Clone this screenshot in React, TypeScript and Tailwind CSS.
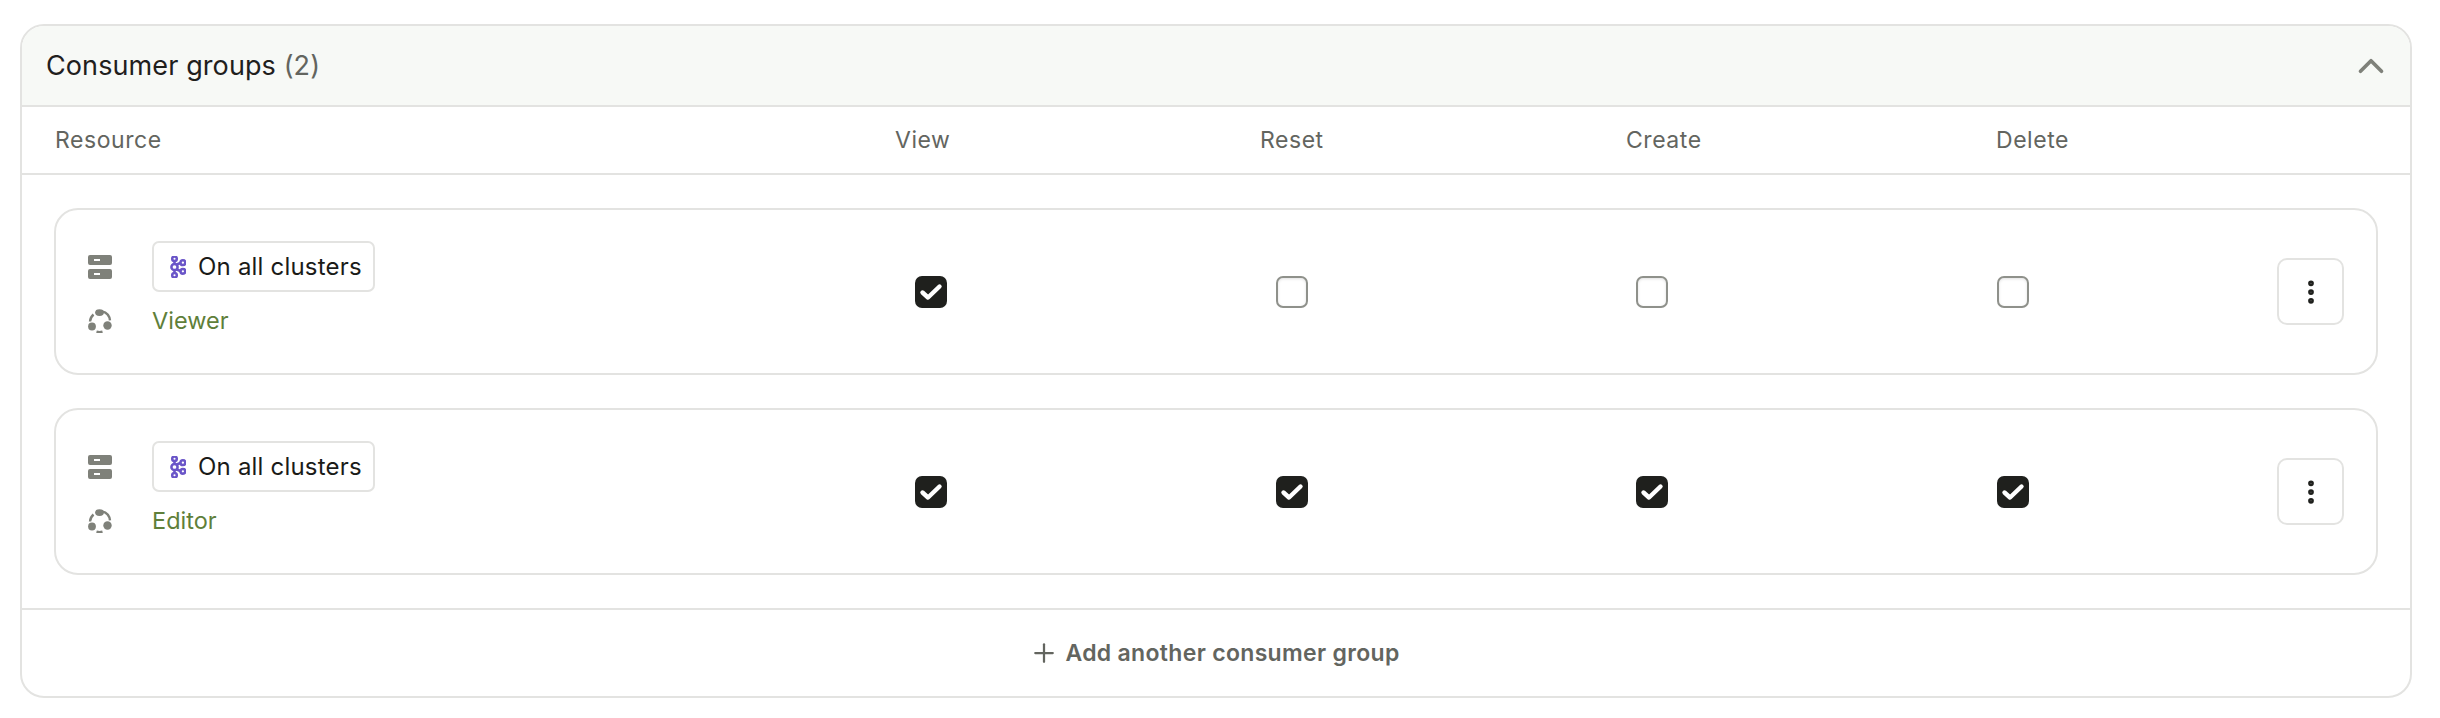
import React from "react";
import { ChevronUp, Plus, EllipsisVertical } from "lucide-react";

function ServerIcon() {
  return (
    <svg width="24" height="24" viewBox="0 0 24 24" className="block">
      <path fillRule="evenodd" fill="#7f817a" d="M2 0h20a2 2 0 0 1 2 2v6a2 2 0 0 1-2 2H2a2 2 0 0 1-2-2V2a2 2 0 0 1 2-2zM6 4v2h6V4H6z" />
      <path fillRule="evenodd" fill="#7f817a" d="M2 14h20a2 2 0 0 1 2 2v6a2 2 0 0 1-2 2H2a2 2 0 0 1-2-2v-6a2 2 0 0 1 2-2zM6 18v2h6v-2H6z" />
    </svg>
  );
}

function GroupIcon() {
  return (
    <svg width="24" height="24" viewBox="0 0 24 24" fill="none" className="block">
      <path d="M5.5 5.5A10.5 10.5 0 0 0 2 12.5" stroke="#7f817a" strokeWidth="2.4" />
      <path d="M14 2.4a10.5 10.5 0 0 1 8 9" stroke="#7f817a" strokeWidth="2.4" />
      <path d="M8.5 22.6a10.5 10.5 0 0 0 6 0" stroke="#7f817a" strokeWidth="2.2" />
      <ellipse cx="11.5" cy="3.6" rx="4.4" ry="3.4" fill="#7f817a" />
      <circle cx="4" cy="17.5" r="3.9" fill="#7f817a" />
      <circle cx="19.5" cy="16.5" r="4.2" fill="#7f817a" />
    </svg>
  );
}

function KafkaIcon() {
  return (
    <svg width="16" height="22" viewBox="0 0 16 22" fill="none" stroke="#6a55c8" strokeWidth="2.5" className="block">
      <path d="M4.5 4v14M4.5 9.5l7-3M4.5 12.5l7 3" />
      <circle cx="4.5" cy="2.8" r="2.3" fill="#fff" />
      <circle cx="4.5" cy="11" r="3.1" fill="#fff" />
      <circle cx="4.5" cy="19.2" r="2.3" fill="#fff" />
      <circle cx="12.9" cy="6.7" r="2.4" fill="#fff" />
      <circle cx="12.9" cy="15.3" r="2.4" fill="#fff" />
    </svg>
  );
}

function Box({ on }: { on: boolean }) {
  if (on) {
    return (
      <div className="w-8 h-8 rounded-[7px] bg-[#1f201d] flex items-center justify-center">
        <svg width="24" height="20" viewBox="0 0 24 20" fill="none">
          <path d="M3.5 10.5l5.5 5L20.5 4.5" stroke="#fff" strokeWidth="4.4" strokeLinecap="round" strokeLinejoin="round" />
        </svg>
      </div>
    );
  }
  return <div className="w-8 h-8 rounded-[7px] bg-white border-2 border-[#8f918b] shadow-[inset_0_1px_3px_rgba(0,0,0,0.12)]" />;
}

function Row({ role, checks }: { role: string; checks: boolean[] }) {
  return (
    <div className="h-[167px] rounded-[24px] border-2 border-[#e3e3e1] flex items-center pl-[32px] pr-[32px]">
      <div className="w-[827px] flex flex-col pb-[6px]">
        <div className="flex items-center h-[51px]">
          <div className="w-[64px]"><ServerIcon /></div>
          <div className="h-[51px] w-[223px] rounded-[7px] border-2 border-[#e3e3e1] flex items-center pl-[16px] gap-[12px]">
            <KafkaIcon />
            <span className="text-[24px] tracking-[0.2px] text-[#1a1b18]">On all clusters</span>
          </div>
        </div>
        <div className="flex items-center h-[30px] mt-[14px]">
          <div className="w-[64px]"><GroupIcon /></div>
          <span className="text-[23.5px] text-[#5f7f3a]">{role}</span>
        </div>
      </div>
      <div className="w-[361px]"><Box on={checks[0]} /></div>
      <div className="w-[360px]"><Box on={checks[1]} /></div>
      <div className="w-[361px]"><Box on={checks[2]} /></div>
      <div className="flex-1"><Box on={checks[3]} /></div>
      <button className="w-[67px] h-[67px] rounded-[10px] border-2 border-[#e3e3e1] flex items-center justify-center">
        <EllipsisVertical size={30} color="#1f201d" strokeWidth={2.6} />
      </button>
    </div>
  );
}

export default function App() {
  return (
    <div className="bg-white h-[718px] pt-[24px] pl-[20px] pr-[28px] font-['Inter',sans-serif]">
      <div className="h-[674px] rounded-[24px] border-2 border-[#e3e3e1] overflow-hidden flex flex-col">
        <div className="h-[81px] shrink-0 bg-[#f7f9f6] border-b-2 border-[#e3e3e1] flex items-center justify-between pl-[24px] pr-[18px]">
          <div className="text-[27px] tracking-[0.1px] text-[#1f201d] pt-[1px]">
            Consumer groups <span className="text-[#63655f]">(2)</span>
          </div>
          <ChevronUp size={42} color="#7f817a" strokeWidth={2.1} />
        </div>
        <div className="h-[68px] shrink-0 border-b-2 border-[#e3e3e1] flex items-center pl-[33px] text-[23px] tracking-[0.55px] text-[#63655f]">
          <div className="w-[840px]">Resource</div>
          <div className="w-[365px]">View</div>
          <div className="w-[366px]">Reset</div>
          <div className="w-[370px]">Create</div>
          <div>Delete</div>
        </div>
        <div className="flex-1 flex flex-col gap-[33px] px-[32px] py-[33px]">
          <Row role="Viewer" checks={[true, false, false, false]} />
          <Row role="Editor" checks={[true, true, true, true]} />
        </div>
        <div className="h-[88px] shrink-0 border-t-2 border-[#e3e3e1] flex items-center justify-center gap-[6px] pr-[3px] text-[23px] tracking-[0.32px] font-semibold text-[#63655f]">
          <Plus size={30} color="#63655f" strokeWidth={1.8} />
          <span>Add another consumer group</span>
        </div>
      </div>
    </div>
  );
}
